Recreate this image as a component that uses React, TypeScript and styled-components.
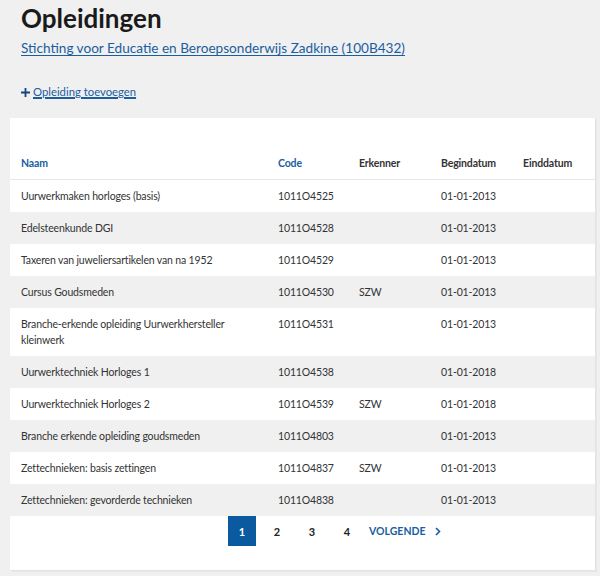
import { FC } from 'react';
import styled, { createGlobalStyle } from 'styled-components';

const GlobalStyle = createGlobalStyle`
  body {
    margin: 0;
    background: #f0f0f0;
    font-family: Lato, "Open Sans", sans-serif;
    color: #222;
  }
`;

type Row = { naam: string; code: string; erkenner: string; begin: string; eind: string };

const rows: Row[] = [
  { naam: 'Uurwerkmaken horloges (basis)', code: '1011O4525', erkenner: '', begin: '01-01-2013', eind: '' },
  { naam: 'Edelsteenkunde DGI', code: '1011O4528', erkenner: '', begin: '01-01-2013', eind: '' },
  { naam: 'Taxeren van juweliersartikelen van na 1952', code: '1011O4529', erkenner: '', begin: '01-01-2013', eind: '' },
  { naam: 'Cursus Goudsmeden', code: '1011O4530', erkenner: 'SZW', begin: '01-01-2013', eind: '' },
  { naam: 'Branche-erkende opleiding Uurwerkhersteller kleinwerk', code: '1011O4531', erkenner: '', begin: '01-01-2013', eind: '' },
  { naam: 'Uurwerktechniek Horloges 1', code: '1011O4538', erkenner: '', begin: '01-01-2018', eind: '' },
  { naam: 'Uurwerktechniek Horloges 2', code: '1011O4539', erkenner: 'SZW', begin: '01-01-2018', eind: '' },
  { naam: 'Branche erkende opleiding goudsmeden', code: '1011O4803', erkenner: '', begin: '01-01-2013', eind: '' },
  { naam: 'Zettechnieken: basis zettingen', code: '1011O4837', erkenner: 'SZW', begin: '01-01-2013', eind: '' },
  { naam: 'Zettechnieken: gevorderde technieken', code: '1011O4838', erkenner: '', begin: '01-01-2013', eind: '' },
];

const App: FC = () => {
  return (
    <Page>
      <GlobalStyle />
      <Header>
        <Title>Opleidingen</Title>
        <OrgLink href="#">Stichting voor Educatie en Beroepsonderwijs Zadkine (100B432)</OrgLink>
        <AddLink href="#">
          <PlusIcon viewBox="0 0 10 10">
            <path d="M4 0h2v4h4v2H6v4H4V6H0V4h4z" fill="currentColor" />
          </PlusIcon>
          <span>Opleiding toevoegen</span>
        </AddLink>
      </Header>
      <Card>
        <Table>
          <colgroup>
            <col style={{ width: 257 }} />
            <col style={{ width: 81 }} />
            <col style={{ width: 82 }} />
            <col style={{ width: 82 }} />
            <col />
          </colgroup>
          <thead>
            <tr>
              <Th $link>Naam</Th>
              <Th $link>Code</Th>
              <Th>Erkenner</Th>
              <Th>Begindatum</Th>
              <Th>Einddatum</Th>
            </tr>
          </thead>
          <tbody>
            {rows.map((r, i) => (
              <Tr key={i} $odd={i % 2 === 1}>
                <Td>{r.naam}</Td>
                <Td>{r.code}</Td>
                <Td>{r.erkenner}</Td>
                <Td>{r.begin}</Td>
                <Td>{r.eind}</Td>
              </Tr>
            ))}
          </tbody>
        </Table>
        <Pagination>
          <PageButton $active>1</PageButton>
          <PageButton>2</PageButton>
          <PageButton>3</PageButton>
          <PageButton>4</PageButton>
          <NextButton>
            VOLGENDE
            <svg width="6" height="9" viewBox="0 0 6 9">
              <path d="M1 1l3.5 3.5L1 8" stroke="currentColor" strokeWidth="1.6" fill="none" />
            </svg>
          </NextButton>
        </Pagination>
      </Card>
    </Page>
  );
};

export default App;

const Page = styled.div`
  width: 600px;
  height: 576px;
  overflow: hidden;
`;

const Header = styled.div`
  display: flex;
  flex-direction: column;
  align-items: flex-start;
  padding: 2px 21px 0;
`;

const Title = styled.h1`
  margin: 0;
  font-size: 26px;
  line-height: 32px;
  font-weight: 700;
  color: #1a1a1a;
`;

const OrgLink = styled.a`
  margin-top: 4px;
  font-size: 13.6px;
  line-height: 20px;
  color: #1a5ea0;
  text-decoration: underline;
  text-underline-offset: 2px;
`;

const AddLink = styled.a`
  display: flex;
  align-items: center;
  gap: 3px;
  margin-top: 26px;
  font-size: 11.3px;
  line-height: 16px;
  color: #1a5ea0;
  span {
    text-decoration: underline;
    text-underline-offset: 2px;
  }
`;

const PlusIcon = styled.svg`
  width: 9px;
  height: 9px;
  color: #15457c;
`;

const Card = styled.div`
  margin: 18px 0 0 10px;
  width: 585px;
  background: #fff;
  box-shadow: 1px 1px 0 #e3e3e3, 2px 2px 0 #e8e8e8;
`;

const Table = styled.table`
  width: 100%;
  border-collapse: collapse;
  table-layout: fixed;
  font-size: 10.5px;
  letter-spacing: -0.15px;
`;

const Th = styled.th<{ $link?: boolean }>`
  text-align: left;
  font-weight: 700;
  padding: 0 11px 8px;
  height: 53px;
  vertical-align: bottom;
  line-height: 16px;
  color: ${p => (p.$link ? '#1a5ea0' : '#333')};
  border-bottom: 1px solid #e6e6e6;
`;

const Tr = styled.tr<{ $odd?: boolean }>`
  background: ${p => (p.$odd ? '#f0f0f0' : '#fff')};
`;

const Td = styled.td`
  padding: 8px 11px;
  line-height: 16px;
  height: 16px;
  vertical-align: top;
  color: #333;
`;

const Pagination = styled.div`
  display: flex;
  align-items: center;
  padding: 0 0 24px 218px;
  height: 30px;
`;

const PageButton = styled.div<{ $active?: boolean }>`
  width: 28px;
  height: 30px;
  margin-right: 7px;
  display: flex;
  align-items: center;
  justify-content: center;
  font-size: 11px;
  font-weight: 700;
  color: ${p => (p.$active ? '#fff' : '#222')};
  background: ${p => (p.$active ? '#0b5aa0' : 'transparent')};
`;

const NextButton = styled.div`
  display: flex;
  align-items: center;
  gap: 9px;
  margin-left: 1px;
  font-size: 10.5px;
  font-weight: 700;
  color: #1a5ea0;
`;
